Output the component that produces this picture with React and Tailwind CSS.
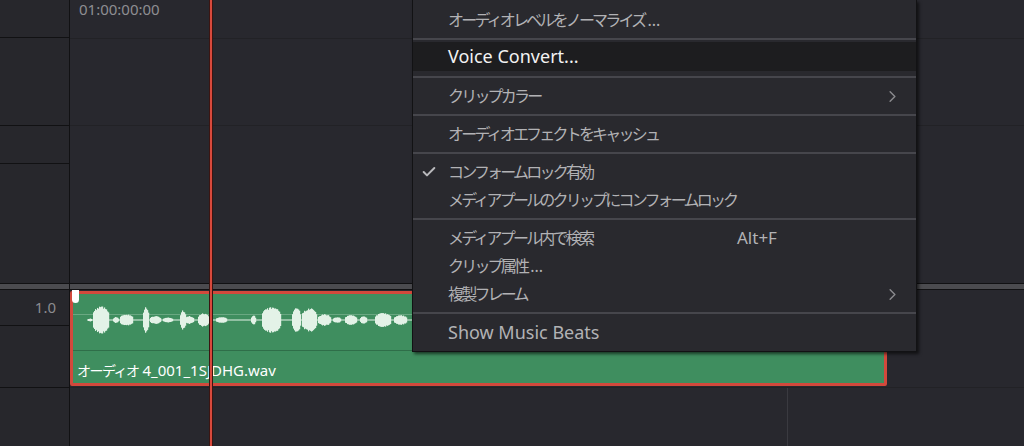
import { ChevronRight, Check } from 'lucide-react';

const FONT = { fontFamily: '"Noto Sans", "Noto Sans CJK JP", sans-serif' };

// envelope of the audio blobs: [start x, end x, half height]
const BLOBS = [
  [15, 18, 1.5], [20, 35, 14], [40, 45, 3], [47, 59, 6], [70, 75, 13], [77, 87, 4],
  [90, 99, 2.5], [107, 112, 10], [112, 120, 4], [125, 135, 7], [143, 153, 3],
  [178, 182, 5], [189, 207, 13], [219, 227, 12], [229, 243, 12], [245, 257, 6],
  [260, 267, 3], [272, 283, 5], [287, 293, 4], [302, 317, 7], [321, 333, 5],
];

function rand(seed) {
  const x = Math.sin(seed * 12.9898) * 43758.5453;
  return x - Math.floor(x);
}

function Waveform() {
  const bars = [];
  BLOBS.forEach(([a, b, h], i) => {
    for (let x = a; x <= b; x++) {
      const t = (x - a) / Math.max(1, b - a);
      const env = Math.pow(Math.sin(Math.PI * (0.08 + t * 0.84)), 0.4);
      const v = Math.max(1, h * env * (0.8 + 0.2 * rand(x * 7 + i)));
      bars.push(<rect key={`${i}-${x}`} x={x} y={26 - v} width="1.2" height={v * 2} fill="#e3f2e7" />);
    }
  });
  return (
    <svg width="811" height="56" className="block">
      <line x1="0" y1="20.5" x2="811" y2="20.5" stroke="#6aa882" strokeWidth="1" />
      <line x1="14" y1="26" x2="340" y2="26" stroke="#e3f2e7" strokeWidth="1.2" />
      {bars}
    </svg>
  );
}

function Sep() {
  return <div className="h-[2px] bg-[#46464c]" />;
}

function Item({ label, latin, active, checked, shortcut, sub }) {
  const dots = !latin && label.endsWith('...');
  const text = dots ? label.slice(0, -3) : label;
  return (
    <div className={`relative flex h-[28px] items-center pl-[35px] pr-[14px] ${active ? 'h-[29px] bg-[#1d1d1f] text-[#f2f2f2]' : 'text-[#b2b2b5]'}`}>
      {checked && <Check size={16} strokeWidth={3} className="absolute left-[8px] text-[#b9b9bc]" />}
      <span className={latin ? 'text-[18px]' : 'text-[16px] tracking-[-2.8px]'}>{text}</span>
      {dots && <span className="pl-[3px] text-[16px]">...</span>}
      {shortcut && <span className="absolute left-[324px] text-[17px]">{shortcut}</span>}
      {sub && <ChevronRight size={19} strokeWidth={1.8} className="ml-auto text-[#8a8a8e]" />}
    </div>
  );
}

export default function App() {
  return (
    <div className="relative flex h-[446px] w-[1024px] overflow-hidden bg-[#28282e]" style={FONT}>
      {/* track headers */}
      <div className="flex w-[70px] shrink-0 flex-col border-r border-[#111113] bg-[#27272c]">
        <div className="h-[38px] border-b border-[#111113]" />
        <div className="h-[88px] border-b border-[#111113]" />
        <div className="h-[38px] border-b border-[#111113]" />
        <div className="h-[119px]" />
        <div className="h-[7px] border-y border-[#111113] bg-[#4b4b4f]" />
        <div className="flex h-[36px] items-center justify-end border-b border-[#111113] pr-[13px] text-[15px] text-[#8c8c90]">1.0</div>
        <div className="h-[62px] border-b border-[#111113]" />
        <div className="flex-1" />
      </div>

      {/* timeline */}
      <div className="flex flex-1 flex-col">
        <div className="h-[39px] border-b border-[#222226] pl-[9px] text-[15px] leading-[18px] text-[#8e8e92]">01:00:00:00</div>
        <div className="h-[87px] border-b border-[#222226]" />
        <div className="h-[157px]" />
        <div className="h-[7px] border-y border-[#111113] bg-[#4b4b4f]" />
        <div className="relative h-[98px] border-b border-[#222226]">
          {/* clip */}
          <div className="absolute left-0 top-[1px] h-[95px] w-[817px] rounded-[2px] border-[3px] border-[#d2493c] bg-[#3f8e5f]">
            <div className="h-[57px] border-b border-[#2f6e49]">
              <Waveform />
            </div>
            <div className="pl-[4px] pt-[9px] leading-[20px] text-white">
              <span className="text-[14px] tracking-[-1.5px]">オーディオ</span>
              <span className="text-[15px]"> 4_001_1SJDHG.wav</span>
            </div>
          </div>
          <div className="absolute left-[2px] top-0 h-[13px] w-[7px] rounded-b-[4px] bg-white" />
        </div>
        <div className="flex flex-1">
          <div className="w-[718px] border-r border-[#3a3a40]" />
          <div className="flex-1" />
        </div>
      </div>

      {/* playhead */}
      <div className="absolute left-[209px] top-0 h-full w-[4px] border-x border-[#3a1512] bg-[#d8493c]" />

      {/* context menu */}
      <div className="absolute left-[412px] top-0 w-[505px] border border-t-0 border-[#121214] bg-[#29292e] shadow-[2px_2px_3px_rgba(0,0,0,0.6)]">
        <div className="pb-[4px] pt-[6px]"><Item label="オーディオレベルをノーマライズ..." /></div>
        <Sep />
        <div className="pb-[5px] pt-[2px]"><Item label="Voice Convert..." latin active /></div>
        <Sep />
        <div className="py-[4px]"><Item label="クリップカラー" sub /></div>
        <Sep />
        <div className="py-[4px]"><Item label="オーディオエフェクトをキャッシュ" /></div>
        <Sep />
        <div className="py-[4px]">
          <Item label="コンフォームロック有効" checked />
          <Item label="メディアプールのクリップにコンフォームロック" />
        </div>
        <Sep />
        <div className="py-[4px]">
          <Item label="メディアプール内で検索" shortcut="Alt+F" />
          <Item label="クリップ属性..." />
          <Item label="複製フレーム" sub />
        </div>
        <Sep />
        <div className="pb-[5px] pt-[4px]"><Item label="Show Music Beats" latin /></div>
      </div>
    </div>
  );
}
